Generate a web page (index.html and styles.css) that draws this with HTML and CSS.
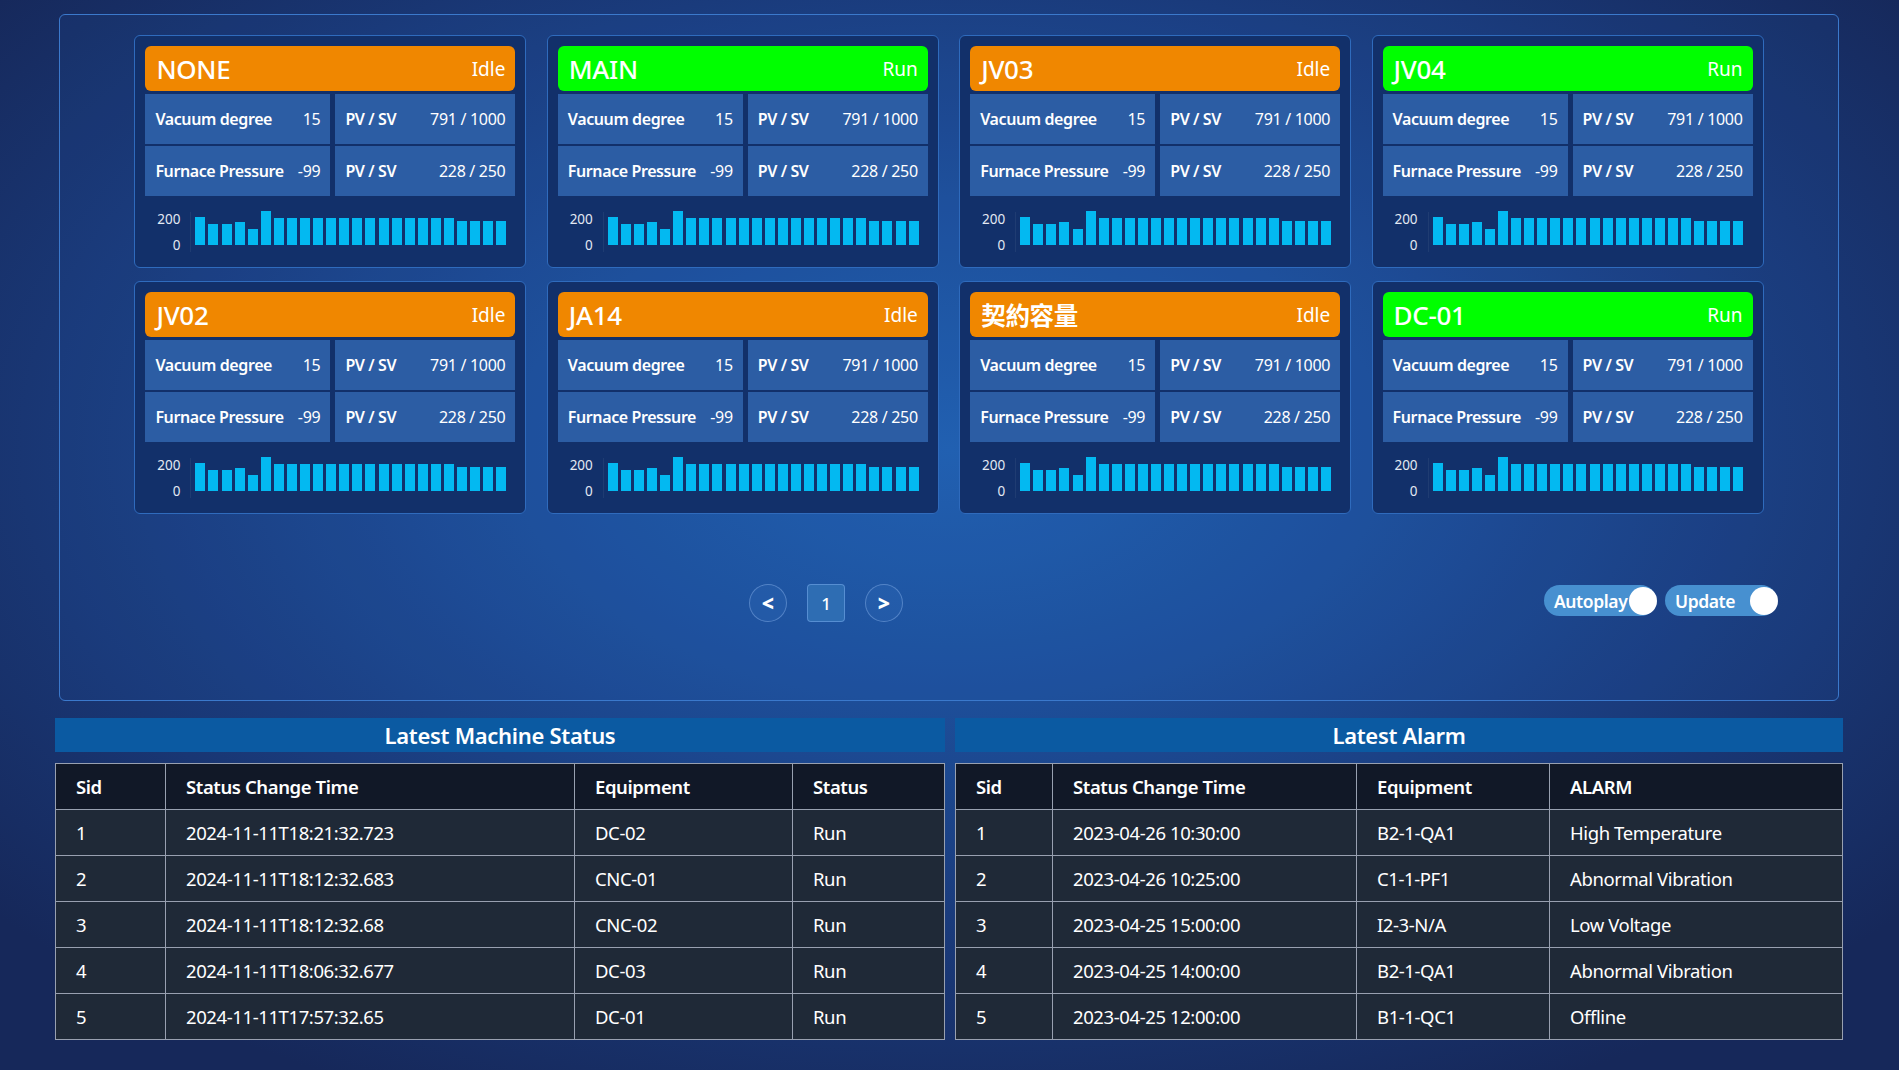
FILE: index.html
```html
<!DOCTYPE html>
<html lang="en">
<head>
<meta charset="utf-8">
<title>Machine Dashboard</title>
<link rel="stylesheet" href="styles.css">
</head>
<body>
<div class="page">
  <section class="panel">
    <div class="cards">
      <div class="card">
        <div class="card-head idle"><span class="name">NONE</span><span class="state">Idle</span></div>
        <div class="cells">
          <div class="cell"><span class="lbl">Vacuum degree</span><span class="val">15</span></div>
          <div class="cell"><span class="lbl">PV / SV</span><span class="val">791 / 1000</span></div>
          <div class="cell"><span class="lbl">Furnace Pressure</span><span class="val">-99</span></div>
          <div class="cell"><span class="lbl">PV / SV</span><span class="val">228 / 250</span></div>
        </div>
        <div class="chart">
          <div class="axis"><span>200</span><span>0</span></div>
          <div class="bars">
            <i style="height:28px"></i><i style="height:21px"></i><i style="height:21px"></i><i style="height:23px"></i><i style="height:16px"></i><i style="height:34px"></i><i style="height:27px"></i><i style="height:27px"></i><i style="height:27px"></i><i style="height:27px"></i><i style="height:27px"></i><i style="height:27px"></i><i style="height:27px"></i><i style="height:27px"></i><i style="height:27px"></i><i style="height:27px"></i><i style="height:27px"></i><i style="height:27px"></i><i style="height:27px"></i><i style="height:27px"></i><i style="height:24px"></i><i style="height:24px"></i><i style="height:24px"></i><i style="height:24px"></i>
          </div>
        </div>
      </div>
      <div class="card">
        <div class="card-head run"><span class="name">MAIN</span><span class="state">Run</span></div>
        <div class="cells">
          <div class="cell"><span class="lbl">Vacuum degree</span><span class="val">15</span></div>
          <div class="cell"><span class="lbl">PV / SV</span><span class="val">791 / 1000</span></div>
          <div class="cell"><span class="lbl">Furnace Pressure</span><span class="val">-99</span></div>
          <div class="cell"><span class="lbl">PV / SV</span><span class="val">228 / 250</span></div>
        </div>
        <div class="chart">
          <div class="axis"><span>200</span><span>0</span></div>
          <div class="bars">
            <i style="height:28px"></i><i style="height:21px"></i><i style="height:21px"></i><i style="height:23px"></i><i style="height:16px"></i><i style="height:34px"></i><i style="height:27px"></i><i style="height:27px"></i><i style="height:27px"></i><i style="height:27px"></i><i style="height:27px"></i><i style="height:27px"></i><i style="height:27px"></i><i style="height:27px"></i><i style="height:27px"></i><i style="height:27px"></i><i style="height:27px"></i><i style="height:27px"></i><i style="height:27px"></i><i style="height:27px"></i><i style="height:24px"></i><i style="height:24px"></i><i style="height:24px"></i><i style="height:24px"></i>
          </div>
        </div>
      </div>
      <div class="card">
        <div class="card-head idle"><span class="name">JV03</span><span class="state">Idle</span></div>
        <div class="cells">
          <div class="cell"><span class="lbl">Vacuum degree</span><span class="val">15</span></div>
          <div class="cell"><span class="lbl">PV / SV</span><span class="val">791 / 1000</span></div>
          <div class="cell"><span class="lbl">Furnace Pressure</span><span class="val">-99</span></div>
          <div class="cell"><span class="lbl">PV / SV</span><span class="val">228 / 250</span></div>
        </div>
        <div class="chart">
          <div class="axis"><span>200</span><span>0</span></div>
          <div class="bars">
            <i style="height:28px"></i><i style="height:21px"></i><i style="height:21px"></i><i style="height:23px"></i><i style="height:16px"></i><i style="height:34px"></i><i style="height:27px"></i><i style="height:27px"></i><i style="height:27px"></i><i style="height:27px"></i><i style="height:27px"></i><i style="height:27px"></i><i style="height:27px"></i><i style="height:27px"></i><i style="height:27px"></i><i style="height:27px"></i><i style="height:27px"></i><i style="height:27px"></i><i style="height:27px"></i><i style="height:27px"></i><i style="height:24px"></i><i style="height:24px"></i><i style="height:24px"></i><i style="height:24px"></i>
          </div>
        </div>
      </div>
      <div class="card">
        <div class="card-head run"><span class="name">JV04</span><span class="state">Run</span></div>
        <div class="cells">
          <div class="cell"><span class="lbl">Vacuum degree</span><span class="val">15</span></div>
          <div class="cell"><span class="lbl">PV / SV</span><span class="val">791 / 1000</span></div>
          <div class="cell"><span class="lbl">Furnace Pressure</span><span class="val">-99</span></div>
          <div class="cell"><span class="lbl">PV / SV</span><span class="val">228 / 250</span></div>
        </div>
        <div class="chart">
          <div class="axis"><span>200</span><span>0</span></div>
          <div class="bars">
            <i style="height:28px"></i><i style="height:21px"></i><i style="height:21px"></i><i style="height:23px"></i><i style="height:16px"></i><i style="height:34px"></i><i style="height:27px"></i><i style="height:27px"></i><i style="height:27px"></i><i style="height:27px"></i><i style="height:27px"></i><i style="height:27px"></i><i style="height:27px"></i><i style="height:27px"></i><i style="height:27px"></i><i style="height:27px"></i><i style="height:27px"></i><i style="height:27px"></i><i style="height:27px"></i><i style="height:27px"></i><i style="height:24px"></i><i style="height:24px"></i><i style="height:24px"></i><i style="height:24px"></i>
          </div>
        </div>
      </div>
      <div class="card">
        <div class="card-head idle"><span class="name">JV02</span><span class="state">Idle</span></div>
        <div class="cells">
          <div class="cell"><span class="lbl">Vacuum degree</span><span class="val">15</span></div>
          <div class="cell"><span class="lbl">PV / SV</span><span class="val">791 / 1000</span></div>
          <div class="cell"><span class="lbl">Furnace Pressure</span><span class="val">-99</span></div>
          <div class="cell"><span class="lbl">PV / SV</span><span class="val">228 / 250</span></div>
        </div>
        <div class="chart">
          <div class="axis"><span>200</span><span>0</span></div>
          <div class="bars">
            <i style="height:28px"></i><i style="height:21px"></i><i style="height:21px"></i><i style="height:23px"></i><i style="height:16px"></i><i style="height:34px"></i><i style="height:27px"></i><i style="height:27px"></i><i style="height:27px"></i><i style="height:27px"></i><i style="height:27px"></i><i style="height:27px"></i><i style="height:27px"></i><i style="height:27px"></i><i style="height:27px"></i><i style="height:27px"></i><i style="height:27px"></i><i style="height:27px"></i><i style="height:27px"></i><i style="height:27px"></i><i style="height:24px"></i><i style="height:24px"></i><i style="height:24px"></i><i style="height:24px"></i>
          </div>
        </div>
      </div>
      <div class="card">
        <div class="card-head idle"><span class="name">JA14</span><span class="state">Idle</span></div>
        <div class="cells">
          <div class="cell"><span class="lbl">Vacuum degree</span><span class="val">15</span></div>
          <div class="cell"><span class="lbl">PV / SV</span><span class="val">791 / 1000</span></div>
          <div class="cell"><span class="lbl">Furnace Pressure</span><span class="val">-99</span></div>
          <div class="cell"><span class="lbl">PV / SV</span><span class="val">228 / 250</span></div>
        </div>
        <div class="chart">
          <div class="axis"><span>200</span><span>0</span></div>
          <div class="bars">
            <i style="height:28px"></i><i style="height:21px"></i><i style="height:21px"></i><i style="height:23px"></i><i style="height:16px"></i><i style="height:34px"></i><i style="height:27px"></i><i style="height:27px"></i><i style="height:27px"></i><i style="height:27px"></i><i style="height:27px"></i><i style="height:27px"></i><i style="height:27px"></i><i style="height:27px"></i><i style="height:27px"></i><i style="height:27px"></i><i style="height:27px"></i><i style="height:27px"></i><i style="height:27px"></i><i style="height:27px"></i><i style="height:24px"></i><i style="height:24px"></i><i style="height:24px"></i><i style="height:24px"></i>
          </div>
        </div>
      </div>
      <div class="card">
        <div class="card-head idle"><span class="name cjk">契約容量</span><span class="state">Idle</span></div>
        <div class="cells">
          <div class="cell"><span class="lbl">Vacuum degree</span><span class="val">15</span></div>
          <div class="cell"><span class="lbl">PV / SV</span><span class="val">791 / 1000</span></div>
          <div class="cell"><span class="lbl">Furnace Pressure</span><span class="val">-99</span></div>
          <div class="cell"><span class="lbl">PV / SV</span><span class="val">228 / 250</span></div>
        </div>
        <div class="chart">
          <div class="axis"><span>200</span><span>0</span></div>
          <div class="bars">
            <i style="height:28px"></i><i style="height:21px"></i><i style="height:21px"></i><i style="height:23px"></i><i style="height:16px"></i><i style="height:34px"></i><i style="height:27px"></i><i style="height:27px"></i><i style="height:27px"></i><i style="height:27px"></i><i style="height:27px"></i><i style="height:27px"></i><i style="height:27px"></i><i style="height:27px"></i><i style="height:27px"></i><i style="height:27px"></i><i style="height:27px"></i><i style="height:27px"></i><i style="height:27px"></i><i style="height:27px"></i><i style="height:24px"></i><i style="height:24px"></i><i style="height:24px"></i><i style="height:24px"></i>
          </div>
        </div>
      </div>
      <div class="card">
        <div class="card-head run"><span class="name">DC-01</span><span class="state">Run</span></div>
        <div class="cells">
          <div class="cell"><span class="lbl">Vacuum degree</span><span class="val">15</span></div>
          <div class="cell"><span class="lbl">PV / SV</span><span class="val">791 / 1000</span></div>
          <div class="cell"><span class="lbl">Furnace Pressure</span><span class="val">-99</span></div>
          <div class="cell"><span class="lbl">PV / SV</span><span class="val">228 / 250</span></div>
        </div>
        <div class="chart">
          <div class="axis"><span>200</span><span>0</span></div>
          <div class="bars">
            <i style="height:28px"></i><i style="height:21px"></i><i style="height:21px"></i><i style="height:23px"></i><i style="height:16px"></i><i style="height:34px"></i><i style="height:27px"></i><i style="height:27px"></i><i style="height:27px"></i><i style="height:27px"></i><i style="height:27px"></i><i style="height:27px"></i><i style="height:27px"></i><i style="height:27px"></i><i style="height:27px"></i><i style="height:27px"></i><i style="height:27px"></i><i style="height:27px"></i><i style="height:27px"></i><i style="height:27px"></i><i style="height:24px"></i><i style="height:24px"></i><i style="height:24px"></i><i style="height:24px"></i>
          </div>
        </div>
      </div>
    </div>

    <div class="controls">
      <div class="pager">
        <button class="pg-arrow">&lt;</button>
        <button class="pg-num">1</button>
        <button class="pg-arrow">&gt;</button>
      </div>
      <div class="toggles">
        <div class="toggle"><span class="t-label">Autoplay</span><span class="knob"></span></div>
        <div class="toggle"><span class="t-label">Update</span><span class="knob"></span></div>
      </div>
    </div>
  </section>

  <section class="bottom">
    <div class="block">
      <div class="block-title">Latest Machine Status</div>
      <table class="grid status">
        <thead>
          <tr><th class="c1">Sid</th><th class="c2">Status Change Time</th><th class="c3">Equipment</th><th class="c4">Status</th></tr>
        </thead>
        <tbody>
          <tr><td>1</td><td>2024-11-11T18:21:32.723</td><td>DC-02</td><td>Run</td></tr>
          <tr><td>2</td><td>2024-11-11T18:12:32.683</td><td>CNC-01</td><td>Run</td></tr>
          <tr><td>3</td><td>2024-11-11T18:12:32.68</td><td>CNC-02</td><td>Run</td></tr>
          <tr><td>4</td><td>2024-11-11T18:06:32.677</td><td>DC-03</td><td>Run</td></tr>
          <tr><td>5</td><td>2024-11-11T17:57:32.65</td><td>DC-01</td><td>Run</td></tr>
        </tbody>
      </table>
    </div>
    <div class="block">
      <div class="block-title">Latest Alarm</div>
      <table class="grid alarm">
        <thead>
          <tr><th class="c1">Sid</th><th class="c2">Status Change Time</th><th class="c3">Equipment</th><th class="c4">ALARM</th></tr>
        </thead>
        <tbody>
          <tr><td>1</td><td>2023-04-26 10:30:00</td><td>B2-1-QA1</td><td>High Temperature</td></tr>
          <tr><td>2</td><td>2023-04-26 10:25:00</td><td>C1-1-PF1</td><td>Abnormal Vibration</td></tr>
          <tr><td>3</td><td>2023-04-25 15:00:00</td><td>I2-3-N/A</td><td>Low Voltage</td></tr>
          <tr><td>4</td><td>2023-04-25 14:00:00</td><td>B2-1-QA1</td><td>Abnormal Vibration</td></tr>
          <tr><td>5</td><td>2023-04-25 12:00:00</td><td>B1-1-QC1</td><td>Offline</td></tr>
        </tbody>
      </table>
    </div>
  </section>
</div>
</body>
</html>
```

FILE: styles.css
```css
* { box-sizing: border-box; }

html, body {
  margin: 0;
  padding: 0;
}

body {
  width: 1899px;
  height: 1070px;
  overflow: hidden;
  font-family: "Noto Sans", "Noto Sans CJK TC", sans-serif;
  color: #ffffff;
  background: #16285a;
  background-image: radial-gradient(ellipse 1250px 720px at 50% 42%, #2160b0 0%, #1d4e99 35%, #1a3b7c 65%, #16285a 100%);
}

.page {
  padding: 14px 0 0 0;
}

/* ---------- Top panel ---------- */
.panel {
  margin: 0 60px 0 59px;
  border: 1px solid #3b79cc;
  border-radius: 6px;
  background: rgba(40, 100, 190, 0.10);
  padding: 20px 0 78px 0;
}

.cards {
  display: grid;
  grid-template-columns: repeat(4, 392px);
  grid-auto-rows: 233px;
  column-gap: 20.4px;
  row-gap: 13px;
  justify-content: center;
}

.card {
  background: #12306a;
  border: 1px solid #2f6bbd;
  border-radius: 6px;
  padding: 10px;
  display: flex;
  flex-direction: column;
}

.card-head {
  height: 45px;
  border-radius: 6px;
  display: flex;
  align-items: center;
  justify-content: space-between;
  padding: 0 10px 0 11px;
  flex: none;
}
.card-head.idle { background: #f08700; }
.card-head.run { background: #00ff00; }

.name {
  font-size: 26px;
  font-weight: 500;
  letter-spacing: -0.3px;
}
.name.cjk {
  font-family: "Noto Sans CJK TC", sans-serif;
  font-weight: 700;
  font-size: 24.5px;
}
.state {
  font-size: 19px;
  font-weight: 400;
}

.cells {
  margin-top: 3px;
  display: grid;
  grid-template-columns: 185px 1fr;
  grid-auto-rows: 50px;
  column-gap: 5px;
  row-gap: 2px;
  flex: none;
}

.cell {
  background: #2c5da4;
  display: flex;
  align-items: center;
  justify-content: space-between;
  padding: 0 10px 0 10px;
  font-size: 16px;
  white-space: nowrap;
}
.lbl { font-weight: 600; letter-spacing: -0.4px; }
.val { font-weight: 400; letter-spacing: -0.3px; }

.chart {
  flex: 1;
  display: flex;
  align-items: flex-end;
  padding-bottom: 12px;
}

.axis {
  width: 46px;
  height: 40px;
  display: flex;
  flex-direction: column;
  justify-content: space-between;
  align-items: flex-end;
  padding-right: 10px;
  font-size: 13.5px;
  color: #e3e9f3;
  line-height: 14px;
  margin-bottom: -7px;
  border-right: 1px solid rgba(255,255,255,0.06);
}

.bars {
  flex: 1;
  margin-left: 4px;
  margin-right: 9px;
  height: 36px;
  display: flex;
  align-items: flex-end;
  justify-content: space-between;
}
.bars i {
  display: block;
  width: 10px;
  background: #03b9f1;
}

/* ---------- Controls ---------- */
.controls {
  margin-top: 70px;
  display: flex;
  align-items: flex-start;
  padding: 0 61px 0 689px;
  height: 38px;
}

.pager {
  display: flex;
  gap: 20px;
}

.pager button {
  width: 38px;
  height: 38px;
  color: #ffffff;
  font-family: "Noto Sans", sans-serif;
  padding: 0;
  cursor: pointer;
}

.pg-arrow {
  border-radius: 50%;
  border: 1px solid rgba(140, 180, 235, 0.45);
  background: rgba(60, 120, 200, 0.18);
  font-size: 21px;
  font-weight: 900;
  line-height: 34px;
}

.pg-num {
  border-radius: 4px;
  border: 1px solid rgba(120, 170, 235, 0.55);
  background: #2e6db3;
  font-size: 17px;
  font-weight: 500;
}

.toggles {
  margin-left: auto;
  display: flex;
  gap: 9px;
  margin-top: 1px;
}

.toggle {
  width: 112px;
  height: 31px;
  border-radius: 16px;
  background: #4790d0;
  display: flex;
  align-items: center;
  position: relative;
  padding-left: 10px;
  overflow: visible;
}

.t-label {
  font-size: 17.5px;
  font-weight: 600;
  letter-spacing: -0.4px;
}

.knob {
  position: absolute;
  right: -1px;
  top: 1.5px;
  width: 28px;
  height: 28px;
  border-radius: 50%;
  background: #ffffff;
}

/* ---------- Bottom tables ---------- */
.bottom {
  margin: 17px 56px 0 55px;
  display: grid;
  grid-template-columns: 890px 1fr;
  column-gap: 10px;
}

.block-title {
  height: 34px;
  background: #0b5aa2;
  text-align: center;
  font-size: 22px;
  font-weight: 600;
  line-height: 34px;
  letter-spacing: -0.3px;
}

.grid {
  margin-top: 11px;
  width: 100%;
  border-collapse: collapse;
  table-layout: fixed;
  font-size: 18.5px;
}

.grid th, .grid td {
  height: 46px;
  border: 1px solid #98a0b0;
  text-align: left;
  padding: 0 0 0 20px;
  white-space: nowrap;
}

.grid th {
  background: #111827;
  font-weight: 600;
  letter-spacing: -0.4px;
}

.grid td {
  background: #1f2937;
  font-weight: 400;
  letter-spacing: -0.4px;
}

.status .c1 { width: 110px; }
.status .c2 { width: 409px; }
.status .c3 { width: 218px; }

.alarm .c1 { width: 97px; }
.alarm .c2 { width: 304px; }
.alarm .c3 { width: 193px; }
```
